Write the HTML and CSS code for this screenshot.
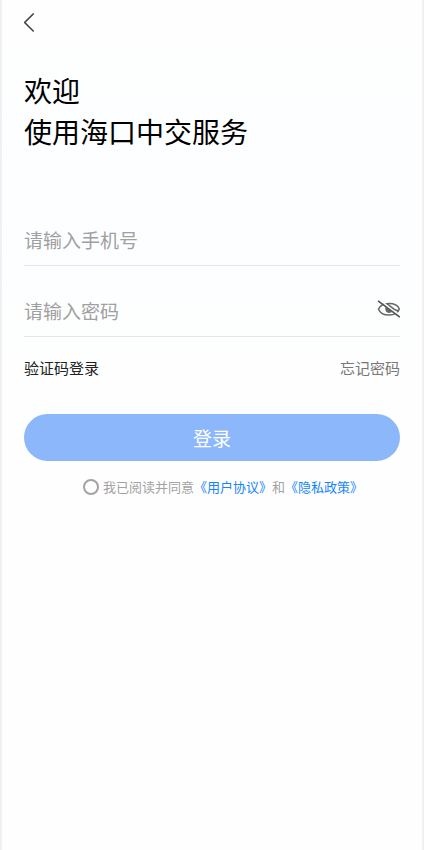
FILE: index.html
```html
<!DOCTYPE html>
<html lang="zh-CN">
<head>
<meta charset="utf-8">
<meta name="viewport" content="width=device-width, initial-scale=1">
<title>登录</title>
<link rel="stylesheet" href="styles.css">
</head>
<body>
<main class="page">
  <header class="nav">
    <button class="icon-button" type="button" aria-label="返回">
      <svg width="12" height="20" viewBox="0 0 12 20" fill="none" stroke="#444" stroke-width="1.6"><path d="M9.7 0.5 0.7 9.5 9.7 18.5"/></svg>
    </button>
  </header>
  <h1 class="title">欢迎<br>使用海口中交服务</h1>
  <form class="form">
    <div class="field">
      <input class="input" type="tel" placeholder="请输入手机号" aria-label="手机号">
    </div>
    <div class="field">
      <input class="input" type="password" placeholder="请输入密码" aria-label="密码">
      <button class="icon-button" type="button" aria-label="显示密码">
        <svg width="24" height="22" viewBox="0 0 24 22" fill="none" stroke="#666" stroke-width="1.5">
          <path d="M2.5 9.2C4 5.5 8 3.5 13 3.5S22 5.500 23.300 9C22 13 18 15 13 15S4 13 2.500 9.200Z"/>
          <path fill="#666" stroke="none" d="M9.500 7 16 12Q12 14 10 11.500 8.500 9.500 9.500 7Z"/>
          <path stroke="#fff" stroke-width="1.6" d="M8 3.500 22 14"/>
          <path d="M11 3.700 18.500 9.500Q20.500 10.500 22 10.500"/>
          <path stroke="#555" stroke-width="1.6" d="M2 .8 23.800 17.200"/>
        </svg>
      </button>
    </div>
    <div class="links">
      <a class="link-code" href="#code">验证码登录</a>
      <a class="link-forgot" href="#forgot">忘记密码</a>
    </div>
    <button class="submit" type="submit">登录</button>
    <div class="agreement">
      <input class="radio" id="agree" type="checkbox">
      <p class="terms"><label for="agree">我已阅读并同意</label><a href="#terms">《用户协议》</a>和<a href="#privacy">《隐私政策》</a></p>
    </div>
  </form>
</main>
</body>
</html>
```
FILE: styles.css
```css
* { box-sizing: border-box; }

body {
  margin: 0;
  background: #fff;
  color: #000;
  font-family: "Noto Sans CJK SC", sans-serif;
}

.page {
  min-height: 100vh;
  padding: 0 22px;
  border: solid #f0f0f0;
  border-width: 0 2px;
  background: linear-gradient(#fefefe, #fcfeff 200px, #fefefe 400px);
}

.nav {
  display: flex;
  align-items: center;
  height: 46px;
}

.icon-button {
  display: flex;
  padding: 0;
  border: 0;
  background: none;
}

.title {
  margin: 24px 0 62px;
  font-size: 28px;
  font-weight: 400;
  line-height: 41px;
}

.form {
  display: flex;
  flex-direction: column;
}

.field {
  display: flex;
  align-items: center;
  height: 52px;
  margin-bottom: 19px;
  border-bottom: 1px solid #e6e6e6;
}

.input {
  flex: 1;
  min-width: 0;
  height: 48px;
  padding: 0;
  border: 0;
  outline: 0;
  background: none;
  font: inherit;
  font-size: 19px;
}

.input::placeholder { color: #a0a0a0; }

.links {
  display: flex;
  justify-content: space-between;
  font-size: 15px;
  line-height: 24px;
}

.links a { text-decoration: none; }
.link-code { color: #222; }
.link-forgot { color: #777; }

.submit {
  height: 47px;
  margin-top: 34px;
  border: 0;
  border-radius: 24px;
  background: #8cb7fb;
  color: #fff;
  font: inherit;
  font-size: 19px;
}

.agreement {
  display: flex;
  align-items: center;
  justify-content: center;
  gap: 4px;
  margin-top: 15px;
  padding-left: 22px;
}

.radio {
  width: 16px;
  height: 16px;
  margin: 0;
  border: 2px solid #a3a3a3;
  border-radius: 50%;
  appearance: none;
}

.radio:checked { background: #1684fc; }

.terms {
  margin: 0;
  color: #a3a3a3;
  font-size: 13px;
  line-height: 22px;
}

.terms a {
  color: #1684fc;
  text-decoration: none;
}
```
